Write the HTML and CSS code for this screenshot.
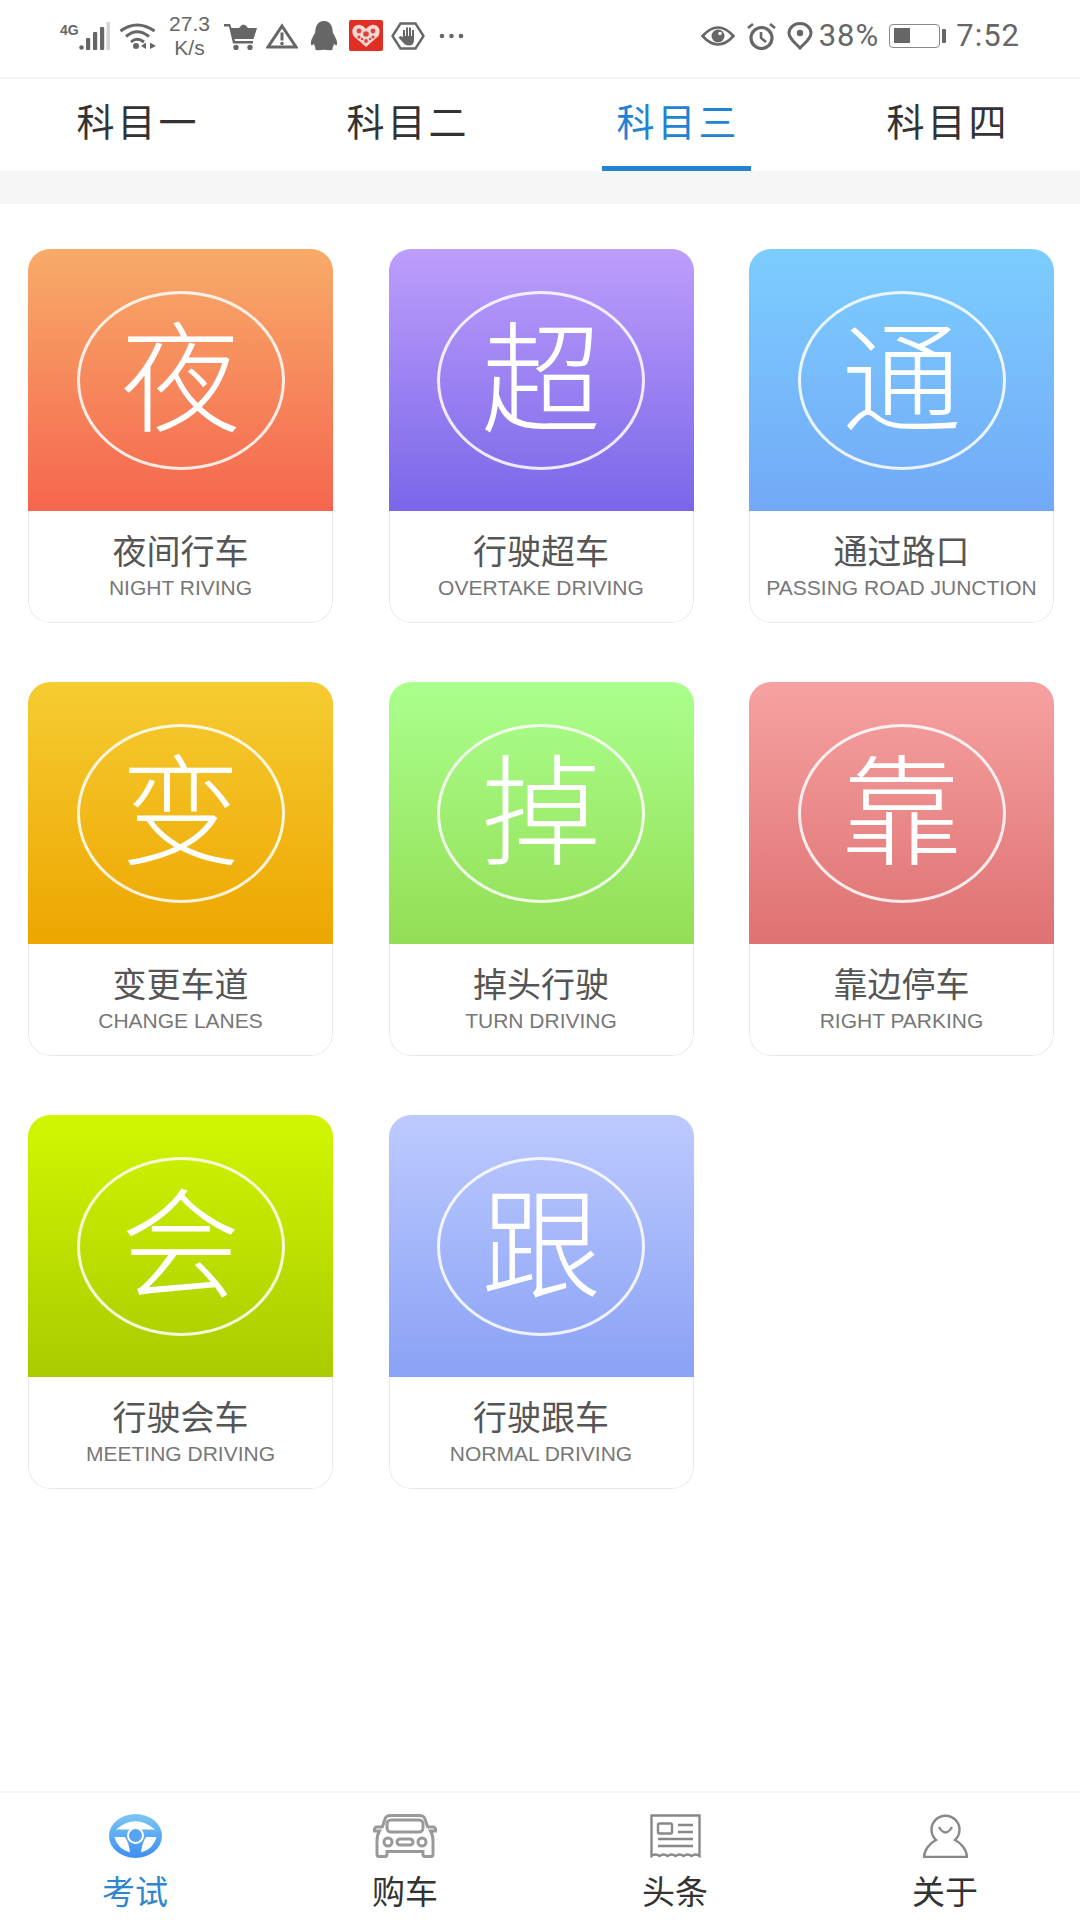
FILE: index.html
```html
<!DOCTYPE html>
<html lang="zh-CN">
<head>
    <meta charset="UTF-8">
    <meta name="viewport" content="width=device-width, initial-scale=1.0">
    <title>科目三</title>
    <link rel="stylesheet" href="styles.css">
</head>
<body>
    <!-- 状态栏 -->
    <div class="status-bar">
        <div class="status-left">
            <svg class="ic-signal" viewBox="0 0 50 28">
                <text x="0" y="13" class="net-text">4G</text>
                <circle cx="21.500" cy="25.500" r="2.300" fill="#666"/>
                <rect x="26" y="16" width="4.200" height="12" rx="1" fill="#666"/>
                <rect x="33" y="10" width="4.200" height="18" rx="1" fill="#666"/>
                <rect x="40" y="5" width="4.200" height="23" rx="1" fill="#666"/>
                <rect x="46.500" y="0" width="3.500" height="28" fill="#d4d4d4"/>
            </svg>
            <svg class="ic-wifi" viewBox="0 0 37 27" fill="none" stroke="#666" stroke-width="3">
                <path d="M1.500 9 Q18 -3 35.500 9"/>
                <path d="M7 14.500 Q18 5 30 14.500"/>
                <path d="M12 20 Q18 14.500 25 20"/>
                <circle cx="17" cy="24" r="3" fill="#666" stroke="none"/>
                <path d="M22 24 L27 20.500 V27 Z M31 20.500 L37 24 L31 27 Z" fill="#666" stroke="none"/>
            </svg>
            <div class="speed">27.3<br>K/s</div>
            <svg class="ic-cart" viewBox="0 0 33 28">
                <path d="M0 2 H6 L7.500 6 H33 L29.500 17 H10.500 L11 19 H29 V21.500 H9 L5 4.500 H0 Z" fill="#666"/>
                <path d="M15 6 Q19.500 -1 24 6 Z" fill="#666"/>
                <circle cx="12" cy="25.500" r="2.700" fill="#666"/>
                <circle cx="26" cy="25.500" r="2.700" fill="#666"/>
            </svg>
            <svg class="ic-warn" viewBox="0 0 32 26">
                <path d="M16 3 L30 24 H2 Z" fill="none" stroke="#666" stroke-width="3"/>
                <rect x="14.500" y="9.500" width="3" height="8" fill="#666"/>
                <circle cx="16" cy="20.500" r="1.800" fill="#666"/>
            </svg>
            <svg class="ic-qq" viewBox="0 0 27 29">
                <path d="M13.500 0 C20 0 22 6 22 11 C24 15 27 19 26 23 C25 24 24 23 23 22 C23 25 21 26 22 27 Q22 29 16 28 Q13.500 27.500 11 28 Q5 29 5 27 C6 26 4 25 4 22 C3 23 2 24 1 23 C0 19 3 15 5 11 C5 6 7 0 13.500 0 Z" fill="#666"/>
            </svg>
            <svg class="ic-pdd" viewBox="0 0 34 31">
                <rect width="34" height="31" rx="2" fill="#e02e24"/>
                <path d="M17 27 L4.500 16 C1 9 6 4 11.500 5 Q15 6 17 9 Q19 6 22.500 5 C28 4 33 9 29.500 16 Z" fill="#f4d6d3"/>
                <g fill="#d9453c">
                    <circle cx="10" cy="11" r="2.400"/><circle cx="17" cy="14" r="2.800"/><circle cx="24" cy="11" r="2.400"/>
                    <circle cx="10" cy="17" r="1.600"/><circle cx="24" cy="17" r="1.600"/><circle cx="17" cy="21" r="1.900"/>
                    <circle cx="13" cy="19" r="1.200"/><circle cx="21" cy="19" r="1.200"/>
                </g>
            </svg>
            <svg class="ic-hand" viewBox="0 0 34 28">
                <path d="M9.500 1.500 H24.500 L32.500 14 L24.500 26.500 H9.500 L1.500 14 Z" fill="none" stroke="#666" stroke-width="2.400"/>
                <path d="M12 15 V8 H14 V14 H15 V5.500 H17 V14 H18 V5.500 H20 V14 H21 V8 H23 V18 Q23 23.500 18 23.500 Q14 23.500 12 20.500 L7.500 15.500 L9.500 14 Z" fill="#666"/>
            </svg>
            <svg class="ic-dots" viewBox="0 0 25 28">
                <circle cx="3" cy="14" r="2.300" fill="#666"/>
                <circle cx="12.500" cy="14" r="2.300" fill="#666"/>
                <circle cx="22" cy="14" r="2.300" fill="#666"/>
            </svg>
        </div>
        <div class="status-right">
            <svg class="ic-eye" viewBox="0 0 34 22">
                <path d="M1.500 11 Q17 -6 32.500 11 Q17 28 1.500 11 Z" fill="none" stroke="#666" stroke-width="2.600"/>
                <circle cx="17" cy="11" r="6.500" fill="#666"/>
                <circle cx="19" cy="8.500" r="1.800" fill="#fff"/>
            </svg>
            <svg class="ic-alarm" viewBox="0 0 31 28" fill="none" stroke="#666">
                <circle cx="15.500" cy="16" r="10.500" stroke-width="3.200"/>
                <path d="M15 10 V16 L20 20" stroke-width="2.600"/>
                <path d="M2 6 L7 2 M29 6 L24 2" stroke-width="2.600"/>
            </svg>
            <svg class="ic-pin" viewBox="0 0 26 28">
                <path d="M13 26 C8.500 21 2 17 2 11 A11 9.500 0 0 1 24 11 C24 17 17.500 21 13 26 Z" fill="none" stroke="#666" stroke-width="3"/>
                <circle cx="13" cy="11" r="3.200" fill="#666"/>
            </svg>
            <span class="status-text batt-text">38%</span>
            <div class="battery">
                <div class="battery-body"><div class="battery-fill"></div></div>
                <div class="battery-tip"></div>
            </div>
            <span class="status-text clock">7:52</span>
        </div>
    </div>

    <!-- 科目切换 -->
    <div class="tabs">
        <div class="tab">科目一</div>
        <div class="tab">科目二</div>
        <div class="tab active">科目三</div>
        <div class="tab">科目四</div>
    </div>
    <div class="tabs-gap"></div>

    <main class="content">
        <div class="card">
            <div class="card-top night"><div class="badge">夜</div></div>
            <div class="card-label"><div class="name">夜间行车</div><div class="en">NIGHT RIVING</div></div>
        </div>
        <div class="card">
            <div class="card-top overtake"><div class="badge">超</div></div>
            <div class="card-label"><div class="name">行驶超车</div><div class="en">OVERTAKE DRIVING</div></div>
        </div>
        <div class="card">
            <div class="card-top junction"><div class="badge">通</div></div>
            <div class="card-label"><div class="name">通过路口</div><div class="en">PASSING ROAD JUNCTION</div></div>
        </div>
        <div class="card">
            <div class="card-top lanes"><div class="badge">变</div></div>
            <div class="card-label"><div class="name">变更车道</div><div class="en">CHANGE LANES</div></div>
        </div>
        <div class="card">
            <div class="card-top turn"><div class="badge">掉</div></div>
            <div class="card-label"><div class="name">掉头行驶</div><div class="en">TURN DRIVING</div></div>
        </div>
        <div class="card">
            <div class="card-top parking"><div class="badge">靠</div></div>
            <div class="card-label"><div class="name">靠边停车</div><div class="en">RIGHT PARKING</div></div>
        </div>
        <div class="card">
            <div class="card-top meeting"><div class="badge">会</div></div>
            <div class="card-label"><div class="name">行驶会车</div><div class="en">MEETING DRIVING</div></div>
        </div>
        <div class="card">
            <div class="card-top normal"><div class="badge">跟</div></div>
            <div class="card-label"><div class="name">行驶跟车</div><div class="en">NORMAL DRIVING</div></div>
        </div>
    </main>

    <!-- 底部导航 -->
    <nav class="bottom-nav">
        <div class="nav-item active">
            <svg class="nav-icon" viewBox="0 0 53 44">
                <defs>
                    <linearGradient id="wheelGrad" x1="0" y1="0" x2="0" y2="1">
                        <stop offset="0" stop-color="#7cc6f4"/>
                        <stop offset="1" stop-color="#3d8ef0"/>
                    </linearGradient>
                </defs>
                <ellipse cx="26.500" cy="22" rx="26.500" ry="22" fill="url(#wheelGrad)"/>
                <path d="M7 15.500 Q26.500 -1 46 15.500 Z" fill="#fff"/>
                <path d="M5.500 23 H16 Q20 29 21 38.500 Q8.500 35 5.500 23 Z" fill="#fff"/>
                <path d="M47.500 23 H37 Q33 29 32 38.500 Q44.500 35 47.500 23 Z" fill="#fff"/>
                <circle cx="26.500" cy="21.500" r="8.500" fill="#fff"/>
                <circle cx="26.500" cy="21.500" r="6.500" fill="#56a4f0"/>
            </svg>
            <span>考试</span>
        </div>
        <div class="nav-item">
            <svg class="nav-icon" viewBox="0 0 64 44" fill="none" stroke="#999" stroke-width="3">
                <path d="M9 14 L12 5 Q13 1.500 18 1.500 H46 Q51 1.500 52 5 L55 14"/>
                <rect x="14" y="6" width="36" height="12" rx="4"/>
                <path d="M9 13 H3 Q1 14 1.500 17 H6.500 Q4 21 4 27 V40 Q4 42.500 6 42.500 H12 Q14 42.500 14 40 V37.500 H50 V40 Q50 42.500 52 42.500 H58 Q60 42.500 60 40 V27 Q60 21 57.500 17 H62.500 Q63 14 61 13 H55"/>
                <circle cx="15" cy="28" r="4"/>
                <circle cx="49" cy="28" r="4"/>
                <rect x="24" y="25" width="16" height="6" rx="3"/>
            </svg>
            <span>购车</span>
        </div>
        <div class="nav-item">
            <svg class="nav-icon" viewBox="0 0 51 44" fill="none" stroke="#888" stroke-width="2.400">
                <path d="M1.500 1.500 H49.500 V42 Q45.500 39 41.500 42 Q37.500 39 33.500 42 Q29.500 39 25.500 42 Q21.500 39 17.500 42 Q13.500 39 9.500 42 Q5.500 39 1.500 42 Z"/>
                <rect x="8" y="9.500" width="14" height="10" rx="1.500"/>
                <path d="M28 11 H43 M28 18 H43 M8 25 H43 M8 32 H43"/>
            </svg>
            <span>头条</span>
        </div>
        <div class="nav-item">
            <svg class="nav-icon" viewBox="0 0 45 44" fill="none" stroke="#888" stroke-width="2.400">
                <path d="M13 26 A14 14 0 1 1 32 26 C38 29 44 36 44 43 H1 C1 36 7 29 13 26 Z"/>
                <path d="M16 13 Q22.500 24 29 13"/>
            </svg>
            <span>关于</span>
        </div>
    </nav>
</body>
</html>
```

FILE: styles.css
```css
* {
    margin: 0;
    padding: 0;
    box-sizing: border-box;
}

body {
    width: 1080px;
    height: 1920px;
    display: flex;
    flex-direction: column;
    background: #fff;
    font-family: 'Noto Sans CJK SC', 'Noto Sans', sans-serif;
    overflow: hidden;
}

/* status bar */
.status-bar {
    height: 79px;
    flex-shrink: 0;
    display: flex;
    align-items: center;
    justify-content: space-between;
    padding: 0 60px 6px 60px;
    border-bottom: 2px solid #f5f5f5;
    color: #666;
}

.status-left,
.status-right {
    display: flex;
    align-items: center;
}

.net-text {
    font-family: 'Liberation Sans', sans-serif;
    font-size: 14px;
    font-weight: bold;
    fill: #666;
}

.ic-signal { width: 50px; height: 28px; }
.ic-wifi { width: 37px; height: 27px; margin-left: 9px; }
.ic-cart { width: 33px; height: 28px; margin-left: 13px; }
.ic-warn { width: 32px; height: 26px; margin-left: 9px; }
.ic-qq { width: 28px; height: 30px; margin-left: 12px; }
.ic-pdd { width: 34px; height: 31px; margin-left: 11px; }
.ic-hand { width: 34px; height: 28px; margin-left: 8px; }
.ic-dots { width: 25px; height: 28px; margin-left: 14px; }
.ic-eye { width: 34px; height: 22px; }
.ic-alarm { width: 31px; height: 28px; margin-left: 11px; }
.ic-pin { width: 26px; height: 28px; margin-left: 10px; }

.speed {
    width: 43px;
    margin-left: 12px;
    font-family: 'Liberation Sans', sans-serif;
    font-size: 21px;
    line-height: 24px;
    text-align: center;
    white-space: nowrap;
}

.status-text {
    font-family: 'Roboto', sans-serif;
    font-size: 31px;
    letter-spacing: 1px;
}

.batt-text {
    margin-left: 6px;
}

.battery {
    display: flex;
    align-items: center;
    gap: 2px;
    margin-left: 10px;
}

.battery-body {
    width: 51px;
    height: 24px;
    padding: 3.500px;
    border: 1.500px solid #888;
    border-radius: 4px;
}

.battery-fill {
    width: 16px;
    height: 100%;
    background: #666;
}

.battery-tip {
    width: 4px;
    height: 14px;
    border-radius: 1px;
    background: #666;
}

.clock {
    margin-left: 10px;
}

/* tabs */
.tabs {
    height: 92px;
    flex-shrink: 0;
    display: flex;
}

.tab {
    position: relative;
    flex: 1;
    padding: 11px 0 0 6px;
    font-size: 38px;
    line-height: 60px;
    letter-spacing: 3px;
    text-align: center;
    color: #333;
}

.tab.active {
    color: #2382d2;
}

.tab.active::after {
    content: '';
    position: absolute;
    left: 62px;
    right: 59px;
    bottom: 0;
    height: 5px;
    background: #2382d2;
}

.tabs-gap {
    height: 33px;
    flex-shrink: 0;
    background: #f6f6f6;
}

/* cards */
.content {
    flex: 1;
    display: grid;
    grid-template-columns: repeat(3, 305px);
    grid-auto-rows: 374px;
    column-gap: 55.500px;
    row-gap: 59px;
    align-content: start;
    padding: 45px 26px 0 28px;
}

.card {
    display: flex;
    flex-direction: column;
    border-radius: 22px;
    overflow: hidden;
    background: #fff;
}

.card-top {
    height: 262px;
    flex-shrink: 0;
    display: flex;
    align-items: center;
    justify-content: center;
}

.night { background: linear-gradient(#f8ab69, #f5664e); }
.overtake { background: linear-gradient(#bd9efc, #7a66e8); }
.junction { background: linear-gradient(#7ccdff, #72a9f7); }
.lanes { background: linear-gradient(#f5cc32, #eea600); }
.turn { background: linear-gradient(#abff8d, #93de55); }
.parking { background: linear-gradient(#f6a1a1, #df7272); }
.meeting { background: linear-gradient(#d2f600, #a9cb00); }
.normal { background: linear-gradient(#bdcaff, #8aa2f5); }

.badge {
    width: 208px;
    height: 179px;
    padding-bottom: 18px;
    display: flex;
    align-items: center;
    justify-content: center;
    border: 3px solid rgba(255, 255, 255, 0.85);
    border-radius: 50%;
    color: #fff;
    font-size: 120px;
    font-weight: 300;
    line-height: 1;
}

.card-label {
    flex: 1;
    display: flex;
    flex-direction: column;
    align-items: center;
    padding-top: 18px;
    border: 1px solid #e8e8e8;
    border-top: none;
    border-radius: 0 0 22px 22px;
}

.name {
    font-size: 34px;
    line-height: 42px;
    color: #555;
}

.en {
    margin-top: 5px;
    font-family: 'Liberation Sans', sans-serif;
    font-size: 21px;
    line-height: 24px;
    white-space: nowrap;
    color: #777;
}

/* bottom nav */
.bottom-nav {
    height: 129px;
    flex-shrink: 0;
    display: flex;
    border-top: 2px solid #f5f5f5;
}

.nav-item {
    flex: 1;
    display: flex;
    flex-direction: column;
    align-items: center;
    padding-top: 21px;
    font-size: 33px;
    line-height: 40px;
    color: #333;
}

.nav-item.active {
    color: #2f86cf;
}

.nav-icon {
    height: 44px;
    margin-bottom: 12px;
}
```
